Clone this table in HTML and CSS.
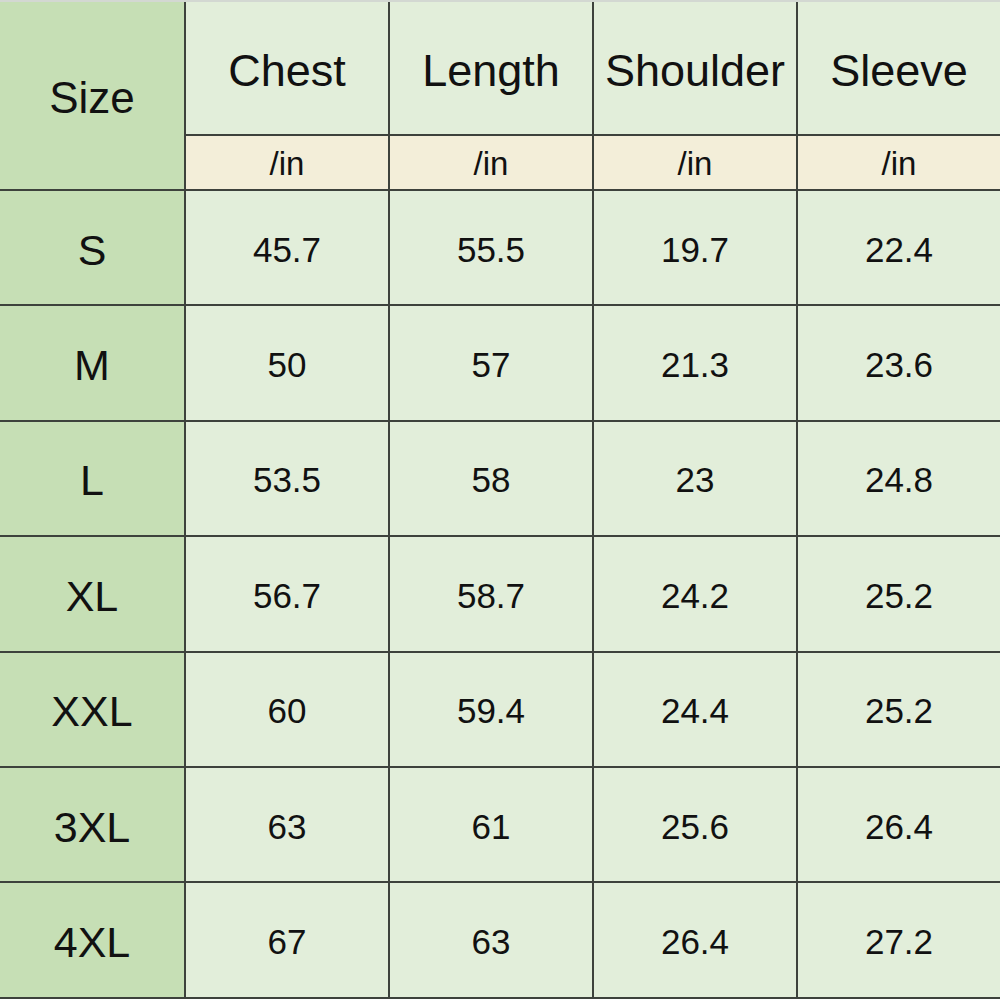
FILE: index.html
```html
<!DOCTYPE html>
<html lang="en">
<head>
<meta charset="utf-8">
<title>Size Chart</title>
<link rel="stylesheet" href="styles.css">
</head>
<body>
<div class="chart">
  <div class="cell size-head">Size</div>
  <div class="cell head">Chest</div>
  <div class="cell head">Length</div>
  <div class="cell head">Shoulder</div>
  <div class="cell head">Sleeve</div>
  <div class="cell unit">/in</div>
  <div class="cell unit">/in</div>
  <div class="cell unit">/in</div>
  <div class="cell unit">/in</div>

  <div class="cell size">S</div>
  <div class="cell val">45.7</div><div class="cell val">55.5</div><div class="cell val">19.7</div><div class="cell val">22.4</div>

  <div class="cell size">M</div>
  <div class="cell val">50</div><div class="cell val">57</div><div class="cell val">21.3</div><div class="cell val">23.6</div>

  <div class="cell size">L</div>
  <div class="cell val">53.5</div><div class="cell val">58</div><div class="cell val">23</div><div class="cell val">24.8</div>

  <div class="cell size">XL</div>
  <div class="cell val">56.7</div><div class="cell val">58.7</div><div class="cell val">24.2</div><div class="cell val">25.2</div>

  <div class="cell size">XXL</div>
  <div class="cell val">60</div><div class="cell val">59.4</div><div class="cell val">24.4</div><div class="cell val">25.2</div>

  <div class="cell size">3XL</div>
  <div class="cell val">63</div><div class="cell val">61</div><div class="cell val">25.6</div><div class="cell val">26.4</div>

  <div class="cell size">4XL</div>
  <div class="cell val">67</div><div class="cell val">63</div><div class="cell val">26.4</div><div class="cell val">27.2</div>
</div>
</body>
</html>
```

FILE: styles.css
```css
html, body {
  margin: 0;
  padding: 0;
  background: #ffffff;
}

body {
  font-family: "Liberation Sans", Arial, sans-serif;
  color: #111111;
}

.chart {
  width: 1000px;
  display: grid;
  grid-template-columns: 184px repeat(4, 1fr);
  grid-template-rows: 132px 53px repeat(7, 113.4px);
  gap: 2px;
  background: #3d423c;
  border-top: 2px solid #d3d8d2;
  border-bottom: 2px solid #3d423c;
}

.cell {
  display: flex;
  align-items: center;
  justify-content: center;
  background: #e2eeda;
}

.size-head {
  grid-row: span 2;
  background: #c6dfb5;
  font-size: 44px;
  padding-top: 4px;
}

.head {
  font-size: 45px;
  padding-top: 6px;
}

.unit {
  background: #f3eed9;
  font-size: 33px;
  padding-top: 2px;
}

.size {
  background: #c6dfb5;
  font-size: 43px;
  padding-top: 5px;
}

.val {
  font-size: 35px;
  padding-top: 4px;
}
```
